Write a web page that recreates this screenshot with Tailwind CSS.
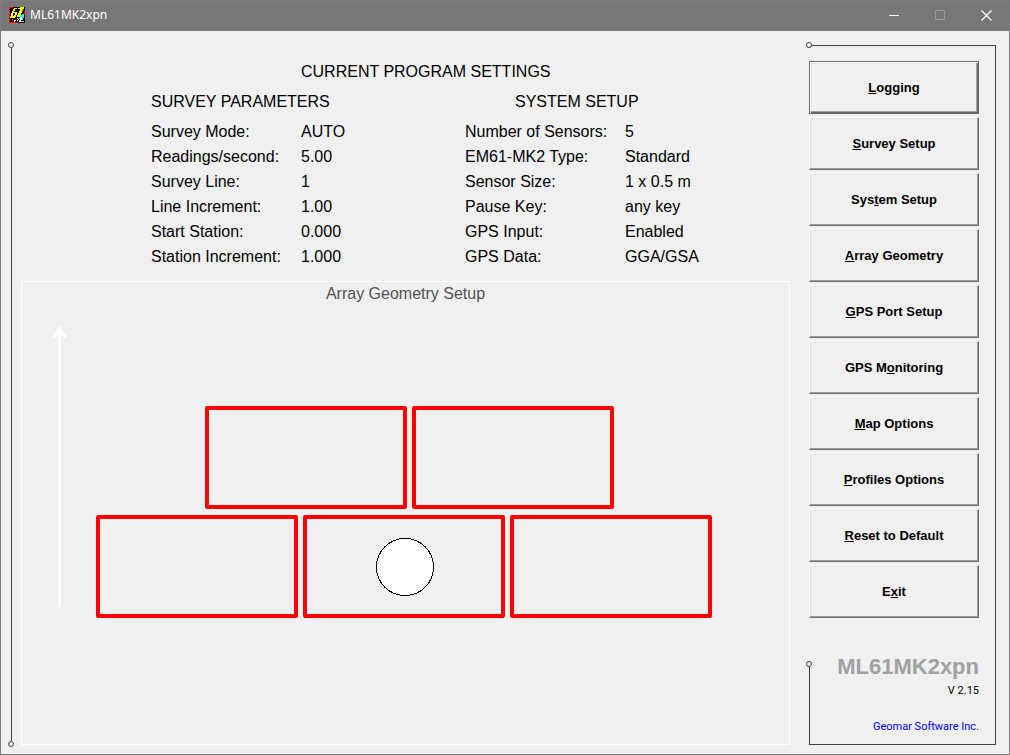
<!DOCTYPE html>
<html lang="en">
<head>
    <meta charset="UTF-8" />
    <meta name="viewport" content="width=device-width, initial-scale=1.0" />
    <title>ML61MK2xpn</title>

    <!-- Tailwind CSS -->
    <script src="https://cdn.jsdelivr.net/npm/@tailwindcss/browser@4"></script>
</head>

<body class="bg-[#f0f0f0] text-black font-['Liberation_Sans',Arial,sans-serif]">
    <div class="min-h-screen flex flex-col border border-[#7c7c7c]">

        <!-- Title bar -->
        <header class="h-[30px] shrink-0 flex items-center bg-[#777777] text-white pl-2 pb-0.5">
            <svg class="w-4 h-4" viewBox="0 0 16 16" shape-rendering="crispEdges" aria-hidden="true">
                <rect width="16" height="16" fill="#000" />
                <path d="M0 1h1v14h-1z M0 15h9v1h-9z M15 4h1v4h-1z M0 7h3v1h-3z M0 0h4v1h-4z M3 12h1v3h-1z" fill="#f00" />
                <path d="M1 9h2v2h-2z M10 14h5v1h-5z" fill="#c0c0c0" />
                <path d="M13 7h2v4h-2z M11 8h2v2h-2z M13 11h1v2h-1z" fill="#0ff" />
                <path d="M5 1h3v1h-3z M4 2h2v2h-2z M3 4h2v2h-2z M2 6h2v4h-2z M3 9h3v2h-3z M4 5h4v1h-4z M6 6h2v2h-2z M5 8h2v2h-2z" fill="#ff0" />
                <path d="M11 0h4v1h-4z M9 1h6v1h-6z M11 2h3v2h-3z M10 4h3v2h-3z M9 6h3v2h-3z M8 8h3v2h-3z" fill="#ff0" />
                <path d="M8 11h1v1h1v-1h1v1h-1v1h1v1h-1v-1h-1v1h-1v-1h1v-1h-1z M11 10h2v3h-1v2h-1z M5 13h2v1h-1v1h-1z" fill="#fff" />
            </svg>
            <h1 class="ml-[5px] text-[12px] font-['Noto_Sans',sans-serif]">ML61MK2xpn</h1>
            <div class="ml-auto flex h-full">
                <button type="button" aria-label="Minimize" class="w-[46px] flex items-center justify-center">
                    <svg class="w-[11px] h-[11px]" viewBox="0 0 11 11" shape-rendering="crispEdges"><path d="M0 5h10v1h-10z" fill="#fff" /></svg>
                </button>
                <button type="button" aria-label="Maximize" disabled class="w-[46px] flex items-center justify-center">
                    <svg class="w-[10px] h-[10px]" viewBox="0 0 10 10" shape-rendering="crispEdges"><path d="M0 0h10v10h-10z M1 1v8h8v-8z" fill="#999" fill-rule="evenodd" /></svg>
                </button>
                <button type="button" aria-label="Close" class="w-[46px] flex items-center justify-center">
                    <svg class="w-[11px] h-[11px]" viewBox="0 0 11 11"><path d="M.5 .5l10 10M10.5 .5l-10 10" stroke="#fff" stroke-width="1.2" /></svg>
                </button>
            </div>
        </header>

        <div class="flex-1 flex">

            <!-- Left rule -->
            <div class="w-5 shrink-0 flex flex-col pl-[7px] pt-[11px] pb-[7px]">
                <div class="w-[6px] h-[6px] rounded-full border border-[#404040]"></div>
                <div class="w-px flex-1 ml-[3px] bg-[#404040]"></div>
                <div class="w-[6px] h-[6px] rounded-full border border-[#404040]"></div>
            </div>

            <main class="flex-1 flex flex-col pb-[9px]">
                <section class="pl-[130px] pb-3 pt-[26px] text-base">
                    <h2 class="pl-[150px] leading-[30px]">CURRENT PROGRAM SETTINGS</h2>
                    <div class="grid grid-cols-[314px_1fr]">
                        <div>
                            <h3 class="leading-[30px]">SURVEY PARAMETERS</h3>
                            <dl class="grid grid-cols-[150px_1fr] pt-[2px] leading-[25px]">
                                <dt>Survey Mode:</dt><dd>AUTO</dd>
                                <dt>Readings/second:</dt><dd>5.00</dd>
                                <dt>Survey Line:</dt><dd>1</dd>
                                <dt>Line Increment:</dt><dd>1.00</dd>
                                <dt>Start Station:</dt><dd>0.000</dd>
                                <dt>Station Increment:</dt><dd>1.000</dd>
                            </dl>
                        </div>
                        <div>
                            <h3 class="pl-[50px] leading-[30px]">SYSTEM SETUP</h3>
                            <dl class="grid grid-cols-[160px_1fr] pt-[2px] leading-[25px]">
                                <dt>Number of Sensors:</dt><dd>5</dd>
                                <dt>EM61-MK2 Type:</dt><dd>Standard</dd>
                                <dt>Sensor Size:</dt><dd>1 x 0.5 m</dd>
                                <dt>Pause Key:</dt><dd>any key</dd>
                                <dt>GPS Input:</dt><dd>Enabled</dd>
                                <dt>GPS Data:</dt><dd>GGA/GSA</dd>
                            </dl>
                        </div>
                    </div>
                </section>

                <!-- Array geometry -->
                <section class="flex-1 flex flex-col border border-white">
                    <h2 class="text-center leading-6 text-[#505050]">Array Geometry Setup</h2>
                    <svg class="w-full flex-1" viewBox="0 0 767 438" preserveAspectRatio="xMidYMin meet" role="img" aria-label="Five sensors, GPS antenna over the middle one">
                        <path d="M37.5 301V21" stroke="#fff" stroke-width="3" fill="none" />
                        <path d="M31 32l6.5 -9l6.5 9" stroke="#fff" stroke-width="3" fill="none" />
                        <g fill="none" stroke="#f00" stroke-width="4" stroke-linejoin="round">
                            <rect x="185" y="102" width="198" height="99" />
                            <rect x="392" y="102" width="198" height="99" />
                            <rect x="76" y="211" width="198" height="99" />
                            <rect x="283" y="211" width="198" height="99" />
                            <rect x="490" y="211" width="198" height="99" />
                        </g>
                        <circle cx="383" cy="261" r="28.5" fill="#fff" stroke="#000" shape-rendering="crispEdges" />
                    </svg>
                </section>
            </main>

            <!-- Menu -->
            <aside class="shrink-0 flex pl-[19px] pr-[13px] pt-[14px] pb-[9px]">
                <div class="relative flex flex-col border-t border-r border-b border-[#404040] pt-[15px] pr-4">
                    <div class="absolute -left-[3px] -top-1 w-[6px] h-[6px] rounded-full border border-[#404040] bg-[#f0f0f0]"></div>

                    <nav class="w-[170px] flex flex-col gap-[3px] text-[13px] font-bold">
                        <button type="button" class="h-[53px] border border-[#696969] shadow-[inset_1px_1px_#fff,inset_-1px_-1px_#696969,inset_-2px_-2px_#a0a0a0,inset_2px_2px_#e3e3e3]"><u>L</u>ogging</button>
                        <button type="button" class="h-[53px] border border-t-white border-l-white border-r-[#696969] border-b-[#696969] shadow-[inset_-1px_-1px_#a0a0a0,inset_1px_1px_#e3e3e3]"><u>S</u>urvey Setup</button>
                        <button type="button" class="h-[53px] border border-t-white border-l-white border-r-[#696969] border-b-[#696969] shadow-[inset_-1px_-1px_#a0a0a0,inset_1px_1px_#e3e3e3]">Sys<u>t</u>em Setup</button>
                        <button type="button" class="h-[53px] border border-t-white border-l-white border-r-[#696969] border-b-[#696969] shadow-[inset_-1px_-1px_#a0a0a0,inset_1px_1px_#e3e3e3]"><u>A</u>rray Geometry</button>
                        <button type="button" class="h-[53px] border border-t-white border-l-white border-r-[#696969] border-b-[#696969] shadow-[inset_-1px_-1px_#a0a0a0,inset_1px_1px_#e3e3e3]"><u>G</u>PS Port Setup</button>
                        <button type="button" class="h-[53px] border border-t-white border-l-white border-r-[#696969] border-b-[#696969] shadow-[inset_-1px_-1px_#a0a0a0,inset_1px_1px_#e3e3e3]">GPS M<u>o</u>nitoring</button>
                        <button type="button" class="h-[53px] border border-t-white border-l-white border-r-[#696969] border-b-[#696969] shadow-[inset_-1px_-1px_#a0a0a0,inset_1px_1px_#e3e3e3]"><u>M</u>ap Options</button>
                        <button type="button" class="h-[53px] border border-t-white border-l-white border-r-[#696969] border-b-[#696969] shadow-[inset_-1px_-1px_#a0a0a0,inset_1px_1px_#e3e3e3]"><u>P</u>rofiles Options</button>
                        <button type="button" class="h-[53px] border border-t-white border-l-white border-r-[#696969] border-b-[#696969] shadow-[inset_-1px_-1px_#a0a0a0,inset_1px_1px_#e3e3e3]"><u>R</u>eset to Default</button>
                        <button type="button" class="h-[53px] border border-t-white border-l-white border-r-[#696969] border-b-[#696969] shadow-[inset_-1px_-1px_#a0a0a0,inset_1px_1px_#e3e3e3]">E<u>x</u>it</button>
                    </nav>

                    <footer class="relative mt-auto pb-2 text-right">
                        <div class="absolute left-0 top-3 bottom-0 w-px bg-[#404040]"></div>
                        <div class="absolute -left-[3px] top-[9px] w-[6px] h-[6px] rounded-full border border-[#404040] bg-[#f0f0f0]"></div>
                        <p class="text-[22px] leading-[30px] font-bold text-[#a0a0a0]">ML61MK2xpn</p>
                        <p class="text-[11px] leading-[18px] font-['Roboto',sans-serif]">V 2.15</p>
                        <a href="#" class="block mt-[18px] text-[11px] leading-[18px] text-[#0000ff] font-['Roboto',sans-serif]">Geomar Software Inc.</a>
                    </footer>
                </div>
            </aside>
        </div>
    </div>
</body>
</html>
